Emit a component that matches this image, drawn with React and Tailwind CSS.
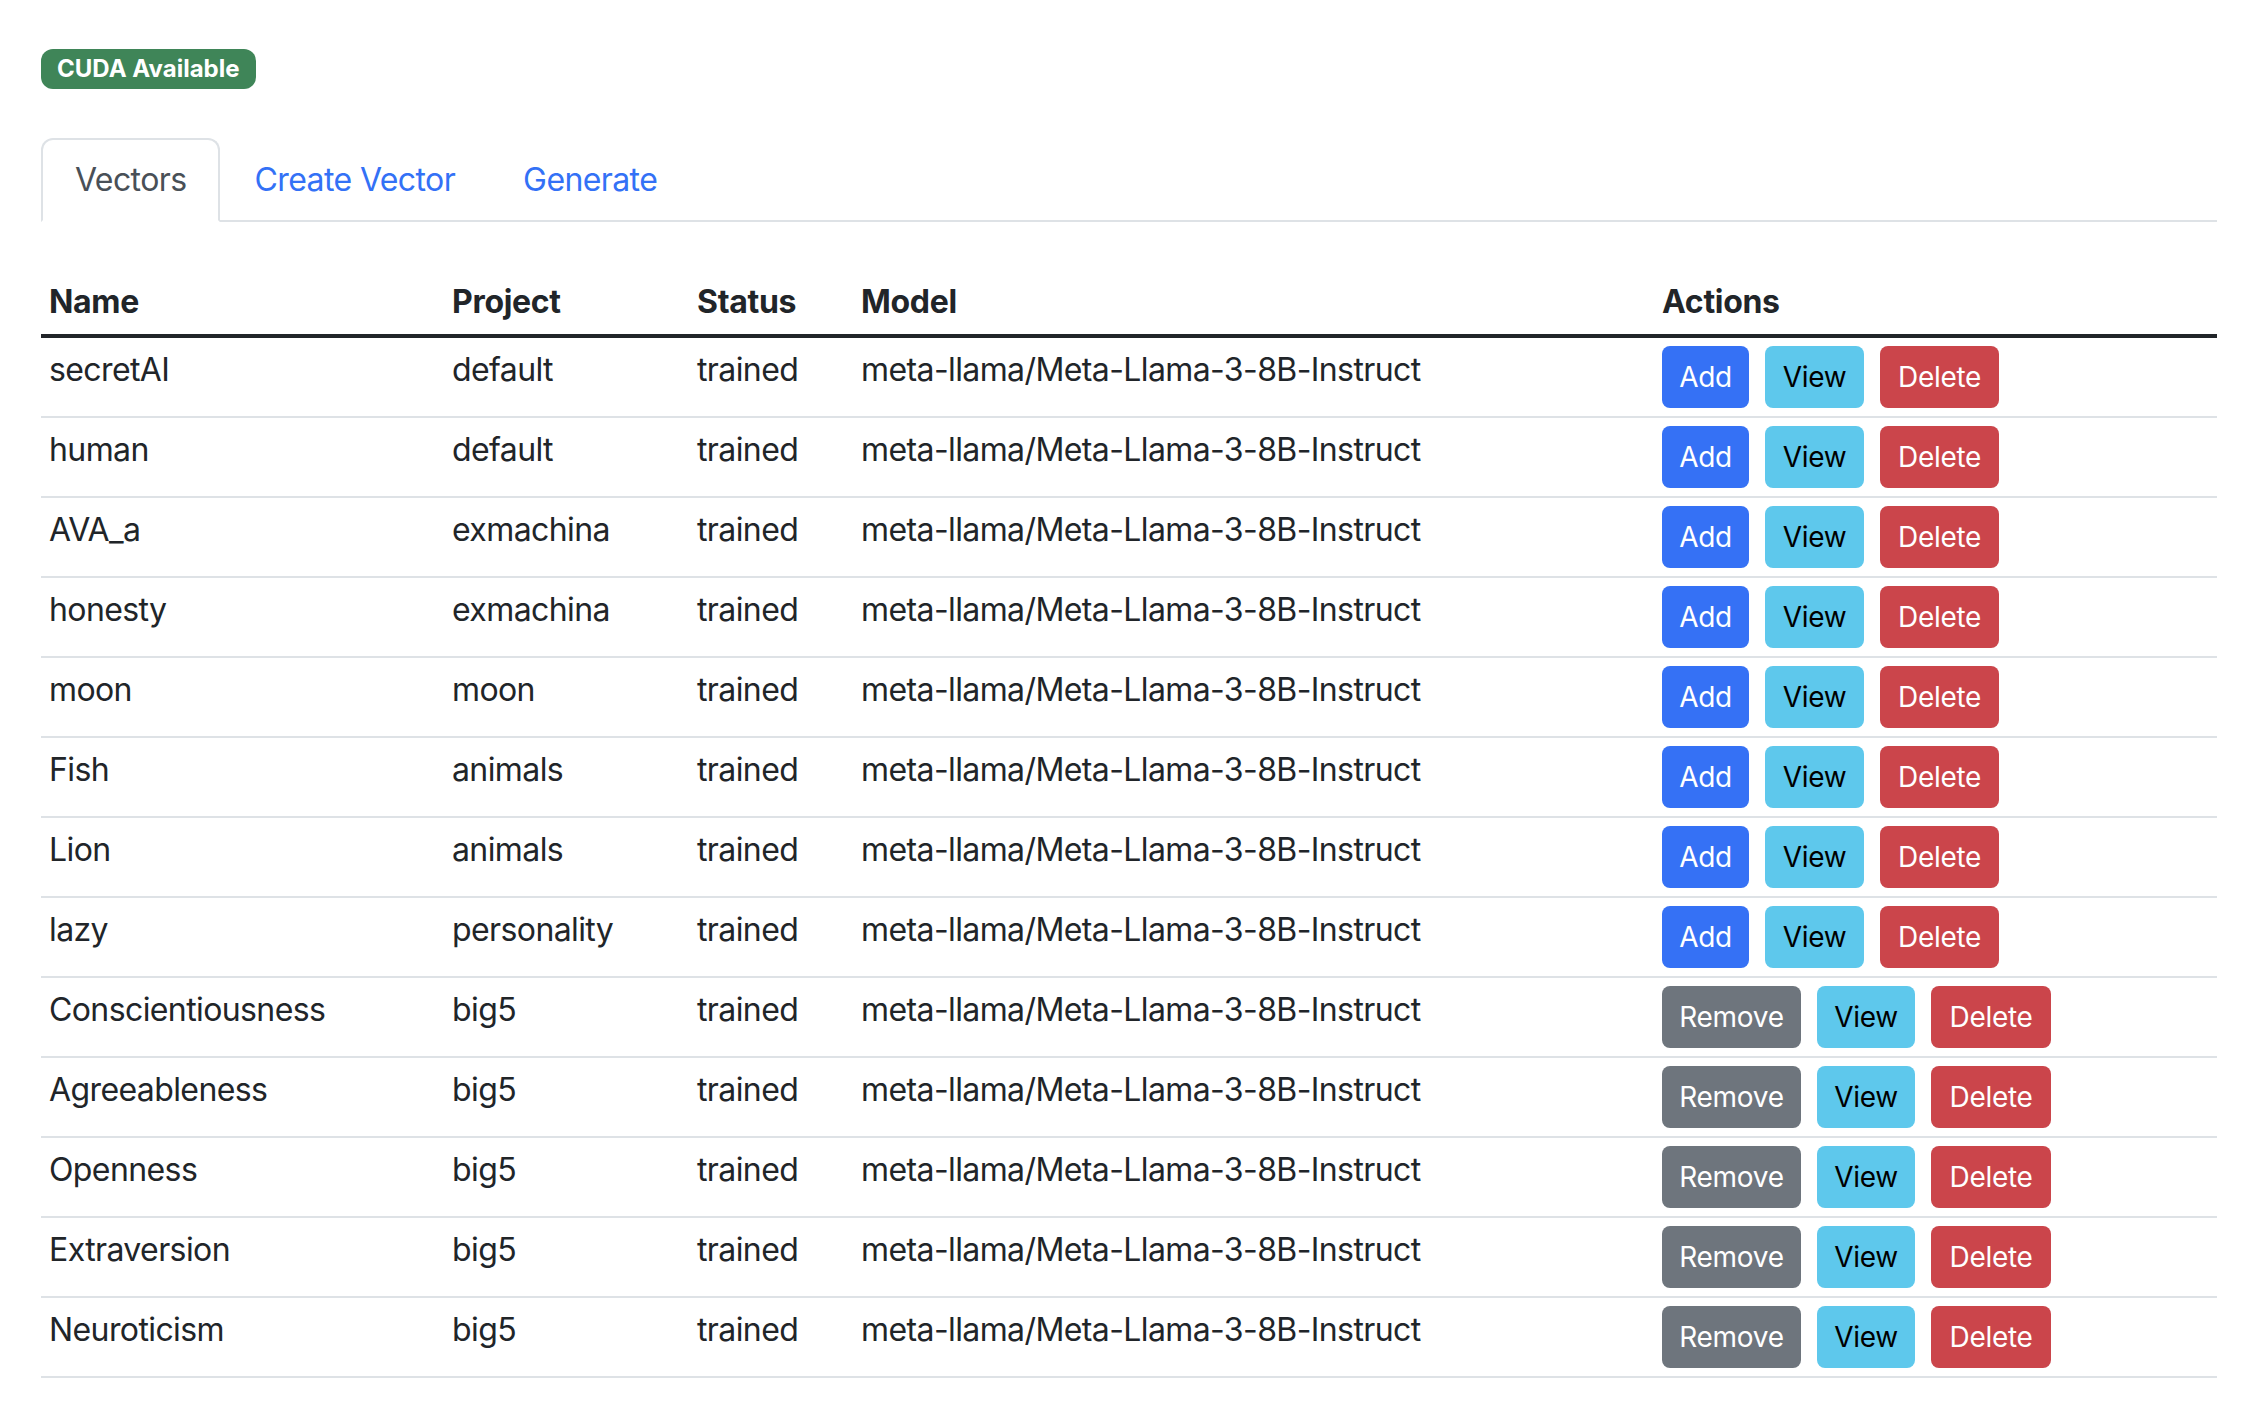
import React from 'react';

const vectors = [
  { name: 'secretAI', project: 'default', added: false },
  { name: 'human', project: 'default', added: false },
  { name: 'AVA_a', project: 'exmachina', added: false },
  { name: 'honesty', project: 'exmachina', added: false },
  { name: 'moon', project: 'moon', added: false },
  { name: 'Fish', project: 'animals', added: false },
  { name: 'Lion', project: 'animals', added: false },
  { name: 'lazy', project: 'personality', added: false },
  { name: 'Conscientiousness', project: 'big5', added: true },
  { name: 'Agreeableness', project: 'big5', added: true },
  { name: 'Openness', project: 'big5', added: true },
  { name: 'Extraversion', project: 'big5', added: true },
  { name: 'Neuroticism', project: 'big5', added: true },
];

const MODEL = 'meta-llama/Meta-Llama-3-8B-Instruct';

function Btn({ className, children }) {
  return (
    <button className={`h-[62px] rounded-[8px] text-[28px] leading-[42px] tracking-[-0.3px] flex items-center justify-center ${className}`}>
      {children}
    </button>
  );
}

export default function App() {
  return (
    <div className="bg-white text-[#212529] px-[41px] pt-[49px]" style={{ fontFamily: 'Inter, "Noto Sans", sans-serif' }}>
      <div>
        <span className="inline-flex h-[40px] items-center px-[16px] rounded-[12px] bg-[#3f8558] text-white text-[24px] font-bold leading-none">
          CUDA Available
        </span>
      </div>

      {/* Tabs */}
      <div className="mt-[49px] w-[2176px] flex border-b-2 border-[#dee2e6] text-[32px] leading-[48px] tracking-[-0.6px]">
        <div className="-mb-[2px] px-[32px] py-[16px] border-2 border-[#dee2e6] border-b-white rounded-t-[12px] bg-white text-[#495057]">
          Vectors
        </div>
        <div className="-mb-[2px] px-[32px] py-[16px] border-2 border-transparent text-[#3371f6]">Create Vector</div>
        <div className="-mb-[2px] px-[32px] py-[16px] border-2 border-transparent text-[#3371f6]">Generate</div>
      </div>

      <table className="mt-[48px] w-[2176px] table-fixed border-separate border-spacing-0 text-[32px] leading-[48px] tracking-[-0.6px]">
        <colgroup>
          <col className="w-[403px]" />
          <col className="w-[245px]" />
          <col className="w-[164px]" />
          <col className="w-[801px]" />
          <col className="w-[563px]" />
        </colgroup>
        <thead>
          <tr>
            {['Name', 'Project', 'Status', 'Model', 'Actions'].map(h => (
              <th key={h} className="p-[8px] text-left font-bold tracking-[-0.3px] align-top border-b-4 border-[#212529]">{h}</th>
            ))}
          </tr>
        </thead>
        <tbody>
          {vectors.map(v => (
            <tr key={v.name}>
              <td className="p-[8px] align-top border-b-2 border-[#dee2e6]">{v.name}</td>
              <td className="p-[8px] align-top border-b-2 border-[#dee2e6]">{v.project}</td>
              <td className="p-[8px] align-top border-b-2 border-[#dee2e6]">trained</td>
              <td className="p-[8px] align-top border-b-2 border-[#dee2e6] whitespace-nowrap">{MODEL}</td>
              <td className="p-[8px] align-top border-b-2 border-[#dee2e6]">
                <div className="flex gap-[16px]">
                  {v.added ? (
                    <Btn className="w-[139px] bg-[#6e757d] text-white">Remove</Btn>
                  ) : (
                    <Btn className="w-[87px] bg-[#3571f5] text-white">Add</Btn>
                  )}
                  <Btn className={`${v.added ? 'w-[98px]' : 'w-[99px]'} bg-[#5ec8ec] text-black`}>View</Btn>
                  <Btn className={`${v.added ? 'w-[120px]' : 'w-[119px]'} bg-[#cb454b] text-white`}>Delete</Btn>
                </div>
              </td>
            </tr>
          ))}
        </tbody>
      </table>
    </div>
  );
}
